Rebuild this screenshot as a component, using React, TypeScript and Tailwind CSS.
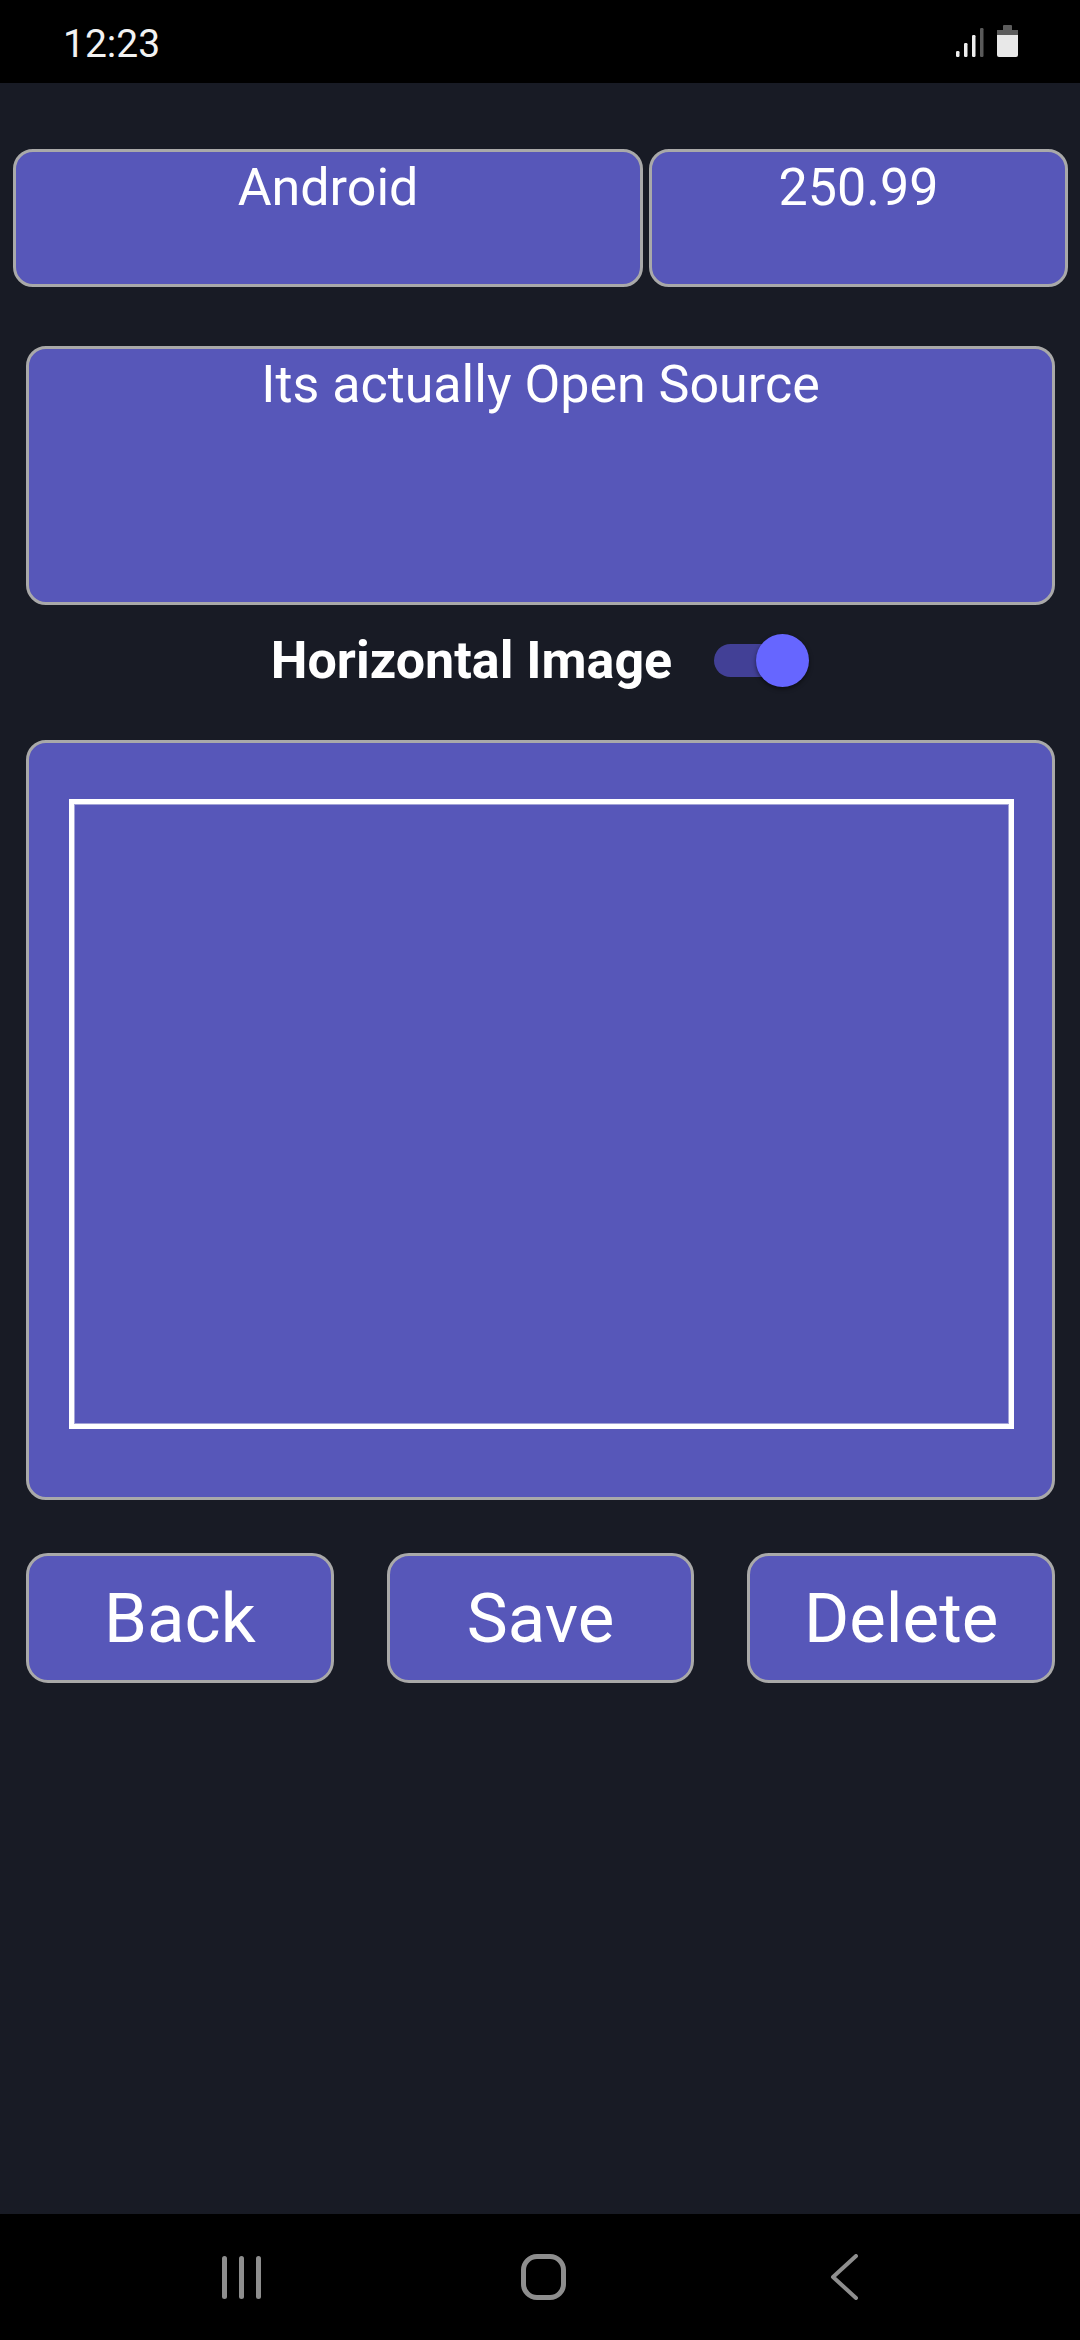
import React from 'react';

const font = { fontFamily: 'Roboto, "Noto Sans", sans-serif' };

const StatusBar: React.FC = () => (
    <div className="h-[83px] bg-black flex justify-between items-start pl-[63px] pr-[60px] shrink-0">
        <div className="mt-[21px] text-[39px] leading-[46px] text-[#f2f2f2]">12:23</div>
        <svg className="mt-[21px]" width="70" height="40" viewBox="950 21 70 40">
            <rect x="956" y="51" width="3.5" height="6" rx="1.2" fill="#eeeeee" />
            <rect x="964" y="43" width="3.5" height="14" rx="1.2" fill="#eeeeee" />
            <rect x="972" y="35" width="3.5" height="22" rx="1.2" fill="#eeeeee" />
            <rect x="980" y="28" width="3.5" height="29" rx="1.2" fill="#5a5a5a" />
            <rect x="1003" y="25" width="9" height="6" rx="1" fill="#5c5c5c" />
            <rect x="997" y="30" width="21" height="27" rx="2" fill="#e8e8e8" />
            <rect x="997" y="30" width="21" height="5" fill="#5c5c5c" />
        </svg>
    </div>
);

const NavBar: React.FC = () => (
    <div className="h-[126px] bg-black flex items-center pl-[90px] shrink-0">
        <div className="w-[302px] flex justify-center gap-[12px]">
            <div className="w-[5px] h-[43px] rounded-full bg-[#8e8e8e]" />
            <div className="w-[5px] h-[43px] rounded-full bg-[#8e8e8e]" />
            <div className="w-[5px] h-[43px] rounded-full bg-[#8e8e8e]" />
        </div>
        <div className="w-[302px] flex justify-center">
            <div className="w-[45px] h-[46px] rounded-[16px] border-[5px] border-[#8e8e8e]" />
        </div>
        <div className="w-[302px] flex justify-center">
            <svg width="30" height="46" viewBox="0 0 30 46">
                <polyline points="26,2 3,23 26,44" fill="none" stroke="#8e8e8e" strokeWidth="4" strokeLinecap="round" strokeLinejoin="round" />
            </svg>
        </div>
    </div>
);

const Field: React.FC<{ text: string; className?: string }> = ({ text, className }) => (
    <div className={`bg-[#5757b9] border-[3px] border-[#a9a9a9] rounded-[20px] pt-[5px] text-center text-white text-[52px] leading-[61px] ${className ?? ''}`}>
        {text}
    </div>
);

const ActionButton: React.FC<{ label: string }> = ({ label }) => (
    <button className="h-[130px] bg-[#5757b9] border-[3px] border-[#a9a9a9] rounded-[22px] flex items-center justify-center text-white text-[69px] leading-none">
        {label}
    </button>
);

export default function App() {
    return (
        <div className="w-[1080px] h-[2340px] flex flex-col bg-[#181b25]" style={font}>
            <StatusBar />
            <main className="flex-1 flex flex-col pt-[66px]">
                <div className="flex gap-[6px] pl-[13px] pr-[12px] h-[138px]">
                    <Field text="Android" className="w-[630px]" />
                    <Field text="250.99" className="flex-1" />
                </div>

                <Field text="Its actually Open Source" className="mt-[59px] ml-[26px] w-[1029px] h-[259px]" />

                <div className="mt-[29px] h-[53px] flex items-center justify-center gap-[42px]">
                    <span className="text-white font-bold text-[52px] leading-[61px]">Horizontal Image</span>
                    <div className="relative w-[95px] h-[53px]">
                        <div className="absolute left-0 top-[10px] w-[85px] h-[33px] rounded-full bg-[#424096]" />
                        <div className="absolute right-0 top-0 w-[53px] h-[53px] rounded-full bg-[#6666ff] shadow-[0_2px_4px_rgba(0,0,0,0.5)]" />
                    </div>
                </div>

                <div className="mt-[53px] ml-[26px] w-[1029px] h-[760px] bg-[#5757b9] border-[3px] border-[#a9a9a9] rounded-[20px] pl-[40px] pt-[56px] pr-[38px] pb-[68px]">
                    <div className="w-full h-full border-[5px] border-white">
                        <div className="w-full h-full border border-[#a3a3d6]" />
                    </div>
                </div>

                <div className="mt-[53px] ml-[26px] w-[1029px] grid grid-cols-3 gap-[53px]">
                    <ActionButton label="Back" />
                    <ActionButton label="Save" />
                    <ActionButton label="Delete" />
                </div>
            </main>
            <NavBar />
        </div>
    );
}
